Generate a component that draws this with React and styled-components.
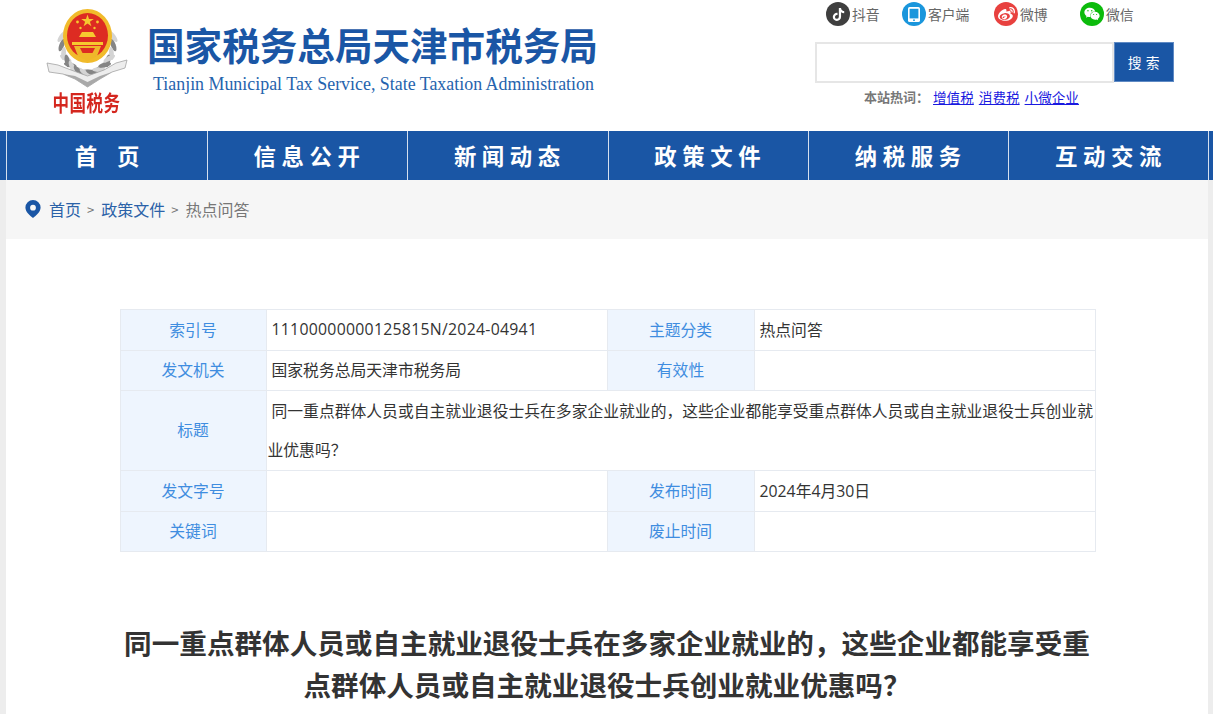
import React from 'react';
import styled, { createGlobalStyle } from 'styled-components';
import { FaTiktok, FaWeibo, FaWeixin } from 'react-icons/fa';

const FONT = '"Noto Sans CJK SC", "Liberation Sans", sans-serif';

const GlobalStyle = createGlobalStyle`
  html, body {
    margin: 0;
    padding: 0;
    background: #ededed;
    font-family: ${FONT};
  }
`;

const NAV_ITEMS = [
  { label: '首 页', wide: true },
  { label: '信息公开' },
  { label: '新闻动态' },
  { label: '政策文件' },
  { label: '纳税服务' },
  { label: '互动交流' },
];

const SOCIALS = [
  { label: '抖音', color: '#3f3f3f', width: 76, icon: <FaTiktok size={13} color="#fff" /> },
  { label: '客户端', color: '#1a96dc', width: 92, icon: <TabletGlyph /> },
  { label: '微博', color: '#e8413f', width: 86, icon: <FaWeibo size={17} color="#fff" /> },
  { label: '微信', color: '#0cbb0c', width: 53, icon: <FaWeixin size={16} color="#fff" /> },
];

function TabletGlyph() {
  return (
    <svg width="12" height="15" viewBox="0 0 12 15">
      <rect x="0" y="0" width="12" height="15" rx="1.6" fill="#fff" />
      <rect x="1.6" y="1.8" width="8.8" height="9.6" fill="#1a96dc" />
      <circle cx="6" cy="13.2" r="0.9" fill="#1a96dc" />
    </svg>
  );
}

// wheat leaves running down both sides of the shield
const LEAVES = Array.from({ length: 11 }, (_, i) => {
  const a = (-8 + i * 15.5) * (Math.PI / 180);
  return {
    key: i,
    x: Math.cos(a) * 26,
    y: 33 + Math.sin(a) * 32,
    deg: (a * 180) / Math.PI + 62,
    dark: i % 2 === 1,
  };
});

function Emblem() {
  return (
    <EmblemSvg width="84" height="84" viewBox="0 0 84 84">
      {[1, -1].map((side) => (
        <g key={side} transform={`translate(43.5 0) scale(${side} 1)`}>
          {LEAVES.map((l) => (
            <ellipse
              key={l.key}
              cx={l.x}
              cy={l.y}
              rx="6.5"
              ry="2.4"
              fill={l.dark ? '#858585' : '#d4d4d4'}
              transform={`rotate(${l.deg} ${l.x} ${l.y})`}
            />
          ))}
        </g>
      ))}
      <path d="M3 55L14 57L27 62L43.500 68L60 62L72 55L83 52L81 60L68 64L56 71L43.500 79L31 71L19 66L5 64Z" fill="#ededed" stroke="#a3a3a3" strokeWidth="0.8" />
      <path d="M19 66L31 68L43.500 74L56 68L68 64L56 71L43.500 79L31 71Z" fill="#a9a9a9" />
      <ellipse cx="43.500" cy="28" rx="24.500" ry="27" fill="#f1bb2b" />
      <ellipse cx="43.500" cy="27.500" rx="20.500" ry="22.500" fill="#dd2b22" />
      <polygon points="43.500,6.500 45,11 49.800,11 45.900,13.800 47.400,18.300 43.500,15.500 39.600,18.300 41.100,13.800 37.200,11 42,11" fill="#f6c92f" />
      <circle cx="33.500" cy="14" r="1.400" fill="#f6c92f" />
      <circle cx="53.500" cy="14" r="1.400" fill="#f6c92f" />
      <circle cx="36.500" cy="20" r="1.200" fill="#f6c92f" />
      <circle cx="50.500" cy="20" r="1.200" fill="#f6c92f" />
      <path d="M35 29L38 24H49L52 29Z" fill="#f6c92f" />
      <rect x="37" y="29" width="13" height="3" fill="#dd2b22" />
      <path d="M28 34H59V37H28Z" fill="#f6c92f" />
      <path d="M30 38H57L53 48L43.500 53L34 48Z" fill="#efb82a" />
      <path d="M36 40H51L48.500 45H38.500Z" fill="#dd2b22" />
    </EmblemSvg>
  );
}

const App = () => (
  <>
    <GlobalStyle />
    <Header>
      <Logo>
        <Badge>
          <Emblem />
          <BadgeText>中国税务</BadgeText>
        </Badge>
        <LogoTitle>
          <LogoName>国家税务总局天津市税务局</LogoName>
          <LogoEnglish>Tianjin Municipal Tax Service, State Taxation Administration</LogoEnglish>
        </LogoTitle>
      </Logo>
      <Tools>
        <Socials>
          {SOCIALS.map((s) => (
            <Social key={s.label} $width={s.width}>
              <SocialIcon $color={s.color}>{s.icon}</SocialIcon>
              {s.label}
            </Social>
          ))}
        </Socials>
        <SearchBar>
          <SearchInput />
          <SearchButton>搜 索</SearchButton>
        </SearchBar>
        <HotWords>
          <HotLabel>本站热词：</HotLabel>
          <a href="#z">增值税</a>
          <a href="#x">消费税</a>
          <a href="#w">小微企业</a>
        </HotWords>
      </Tools>
    </Header>
    <Nav>
      <NavInner>
        {NAV_ITEMS.map((item) => (
          <NavItem key={item.label} $wide={item.wide}>{item.label}</NavItem>
        ))}
      </NavInner>
    </Nav>
    <Page>
      <Crumbs>
        <svg width="16" height="18" viewBox="0 0 16 18">
          <path fillRule="evenodd" d="M8 0a7.6 7.6 0 0 1 7.6 7.6C15.600 12 11 15.800 8 18 5 15.800.4 12 .4 7.600A7.600 7.600 0 0 1 8 0Zm0 4.800a2.900 2.900 0 1 0 0 5.800 2.900 2.900 0 0 0 0-5.800Z" fill="#1a56a5" />
        </svg>
        <CrumbLink>首页</CrumbLink>
        <CrumbSep>&gt;</CrumbSep>
        <CrumbLink>政策文件</CrumbLink>
        <CrumbSep>&gt;</CrumbSep>
        <CrumbCurrent>热点问答</CrumbCurrent>
      </Crumbs>
      <Main>
        <InfoTable>
          <colgroup>
            <col width="146" />
            <col width="341" />
            <col width="147" />
            <col width="341" />
          </colgroup>
          <tbody>
            <Row $h={41}>
              <Label>索引号</Label>
              <Value $code>11100000000125815N/2024-04941</Value>
              <Label>主题分类</Label>
              <Value>热点问答</Value>
            </Row>
            <Row $h={40}>
              <Label>发文机关</Label>
              <Value>国家税务总局天津市税务局</Value>
              <Label>有效性</Label>
              <Value />
            </Row>
            <Row $h={80}>
              <Label>标题</Label>
              <TitleValue colSpan={3}>同一重点群体人员或自主就业退役士兵在多家企业就业的，这些企业都能享受重点群体人员或自主就业退役士兵创业就业优惠吗？</TitleValue>
            </Row>
            <Row $h={41}>
              <Label>发文字号</Label>
              <Value />
              <Label>发布时间</Label>
              <Value>2024年4月30日</Value>
            </Row>
            <Row $h={40}>
              <Label>关键词</Label>
              <Value />
              <Label>废止时间</Label>
              <Value />
            </Row>
          </tbody>
        </InfoTable>
        <Heading>同一重点群体人员或自主就业退役士兵在多家企业就业的，这些企业都能享受重点群体人员或自主就业退役士兵创业就业优惠吗？</Heading>
      </Main>
    </Page>
  </>
);

export default App;

const Header = styled.header`
  display: flex;
  justify-content: space-between;
  height: 131px;
  background: #fff;
`;

const Logo = styled.div`
  display: flex;
  padding: 8px 0 0 44px;
`;

const Badge = styled.div`
  display: flex;
  flex-direction: column;
  align-items: center;
  width: 84px;
`;

const EmblemSvg = styled.svg`
  filter: blur(0.35px);
`;

const BadgeText = styled.div`
  margin: 0 0 0 1px;
  color: #d4261e;
  font-size: 16.500px;
  font-weight: 700;
  line-height: 20px;
  letter-spacing: 0.5px;
  white-space: nowrap;
  transform: scaleY(1.3);
`;

const LogoTitle = styled.div`
  display: flex;
  flex-direction: column;
  margin-left: 19px;
  padding-top: 11px;
`;

const LogoName = styled.div`
  color: #1a56a5;
  font-size: 37.600px;
  font-weight: 700;
  line-height: 50px;
  white-space: nowrap;
`;

const LogoEnglish = styled.div`
  margin: 4px 0 0 6px;
  color: #2563ad;
  font-family: "Liberation Serif", serif;
  font-size: 17.900px;
  line-height: 22px;
  white-space: nowrap;
`;

const Tools = styled.div`
  display: flex;
  flex-direction: column;
  width: 398px;
`;

const Socials = styled.div`
  display: flex;
  padding: 2px 0 0 11px;
  height: 40px;
  box-sizing: border-box;
`;

const Social = styled.div`
  display: flex;
  align-items: center;
  width: ${(p) => p.$width}px;
  height: 24px;
  color: #666;
  font-size: 13.8px;
  white-space: nowrap;
`;

const SocialIcon = styled.span`
  display: flex;
  align-items: center;
  justify-content: center;
  width: 24px;
  height: 24px;
  margin-right: 2px;
  border-radius: 50%;
  background: ${(p) => p.$color};
  flex: none;
`;

const SearchBar = styled.div`
  display: flex;
  height: 42px;
  margin-top: 2px;
`;

const SearchInput = styled.input`
  width: 299px;
  height: 41px;
  padding: 0 8px;
  border: 2px solid #e6e6e6;
  box-sizing: border-box;
  outline: none;
`;

const SearchButton = styled.button`
  width: 60px;
  height: 40px;
  padding: 0;
  border: 1px solid #5f8ac4;
  background: #1a56a5;
  color: #fff;
  font-family: ${FONT};
  font-size: 13.800px;
  letter-spacing: 0.6px;
`;

const HotWords = styled.div`
  display: flex;
  gap: 5px;
  padding: 4px 0 0 49px;
  font-size: 13.600px;
  line-height: 18px;

  a {
    color: #1a1ae0;
    text-decoration: underline;
  }
`;

const HotLabel = styled.span`
  margin-right: -1px;
  color: #777;
  font-size: 13px;
  font-weight: 700;
`;

const Nav = styled.nav`
  height: 49px;
  background: #1a56a5;
`;

const NavInner = styled.div`
  display: grid;
  grid-template-columns: repeat(6, 200.4px);
  width: 1203px;
  height: 100%;
  margin-left: 6.4px;
  box-sizing: border-box;
  border-right: 1px solid #d5e0ef;
`;

const NavItem = styled.div`
  display: flex;
  align-items: center;
  justify-content: center;
  padding: 0 0 2px ${(p) => (p.$wide ? '7.5px' : '4px')};
  border-left: 1px solid #d5e0ef;
  color: #fff;
  font-size: 22.400px;
  font-weight: 700;
  letter-spacing: ${(p) => (p.$wide ? '7.5px' : '5.6px')};
  white-space: pre;
`;

const Page = styled.div`
  width: 1202px;
  height: calc(100vh - 180px);
  margin-left: 6px;
  overflow: hidden;
  background: #fff;
`;

const Crumbs = styled.div`
  display: flex;
  align-items: center;
  height: 59px;
  padding: 0 0 1px 19px;
  box-sizing: border-box;
  background: #f6f6f6;
  font-size: 16px;
`;

const CrumbLink = styled.span`
  margin-left: 8px;
  color: #2b62a8;

  & + span + & {
    margin-left: 7px;
  }
`;

const CrumbSep = styled.span`
  margin-left: 6px;
  color: #777;
  font-size: 13px;
`;

const CrumbCurrent = styled.span`
  margin-left: 7px;
  color: #777;
`;

const Main = styled.main`
  padding: 70px 113px 0 113.500px;
`;

const InfoTable = styled.table`
  width: 975px;
  border-collapse: collapse;
  table-layout: fixed;
  font-size: 15.8px;
`;

const Row = styled.tr`
  height: ${(p) => p.$h}px;
`;

const Label = styled.td`
  padding: 0 0 2px;
  border: 1px solid #e6eaf0;
  background: #eef5fe;
  color: #3f8de0;
  text-align: center;
`;

const Value = styled.td`
  padding: 0 0 2px 5px;
  border: 1px solid #e6eaf0;
  color: #333;
  font-family: "Open Sans", ${FONT};
  letter-spacing: ${(p) => (p.$code ? '0.28px' : '0')};
`;

const TitleValue = styled.td`
  padding: 0 0 0.500px 1px;
  border: 1px solid #e6eaf0;
  color: #333;
  line-height: 39.250px;
  text-indent: 4px;
`;

const Heading = styled.h1`
  width: 975px;
  margin: 69px 0 0;
  color: #333;
  font-size: 27.600px;
  font-weight: 700;
  line-height: 42px;
  text-align: center;
`;
